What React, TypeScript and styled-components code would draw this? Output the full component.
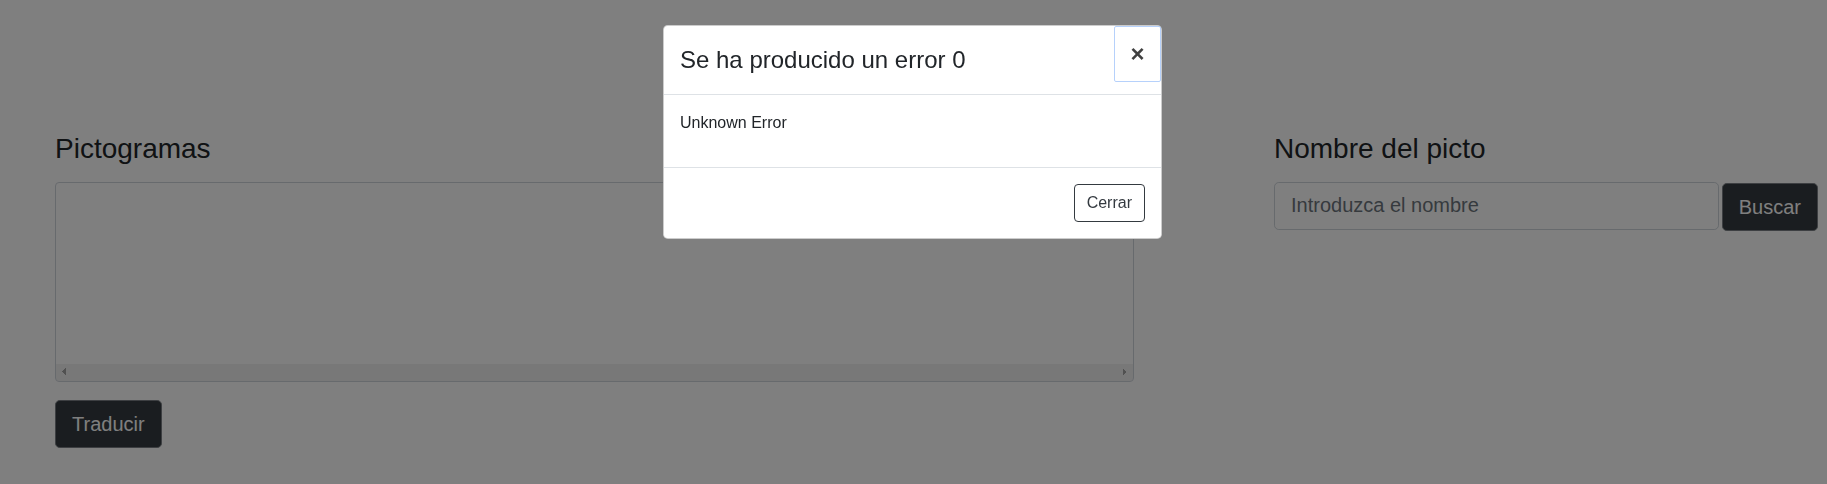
import React from "react";
import styled, { createGlobalStyle } from "styled-components";

const Global = createGlobalStyle`
  html, body { margin: 0; padding: 0; background: #fff; }
  body {
    font-family: "Liberation Sans", Arial, sans-serif;
    font-size: 16px;
    line-height: 1.5;
    color: #212529;
  }
  * { box-sizing: border-box; }
`;

const Page = styled.main`
  display: flex;
  align-items: flex-start;
  gap: 140px;
  padding: 132px 0 0 55px;
  height: 484px;
`;

const Column = styled.section<{ $width: number }>`
  display: flex;
  flex-direction: column;
  align-items: flex-start;
  width: ${(p) => p.$width}px;
`;

const Heading = styled.h3`
  margin: 0 0 16px;
  font-size: 28px;
  font-weight: 400;
  line-height: 1.2;
  color: #212529;
`;

const arrow = "#a3a3a3";

/* The textarea draws its (always visible) horizontal scrollbar strip
   with background layers: two arrow triangles and a light track. */
const TextArea = styled.textarea`
  width: 100%;
  height: 200px;
  border: 1px solid #ced4da;
  border-radius: 4px;
  padding: 6px 12px 23px;
  font-family: inherit;
  font-size: 16px;
  resize: none;
  overflow: hidden;
  white-space: nowrap;
  background-color: #fff;
  background-repeat: no-repeat;
  background-size: 4px 4px, 4px 4px, 4px 4px, 4px 4px, 100% 17px;
  background-position:
    left 6px bottom 9px,
    left 6px bottom 5px,
    right 6px bottom 9px,
    right 6px bottom 5px,
    left 0 bottom 0;
  background-image:
    linear-gradient(to top left, ${arrow} 50%, transparent 50%),
    linear-gradient(to bottom left, ${arrow} 50%, transparent 50%),
    linear-gradient(to top right, ${arrow} 50%, transparent 50%),
    linear-gradient(to bottom right, ${arrow} 50%, transparent 50%),
    linear-gradient(#f1f1f1, #f1f1f1);
  background-origin: padding-box;
  background-clip: padding-box;
`;

const DarkButton = styled.button<{ $mt?: number }>`
  margin-top: ${(p) => p.$mt ?? 0}px;
  height: 48px;
  padding: 8px 16px;
  font-family: inherit;
  font-size: 20px;
  line-height: 1.5;
  color: #fff;
  background: #343a40;
  border: 1px solid #7a7f84;
  border-radius: 4.8px;
  flex-shrink: 0;
`;

const SearchRow = styled.div`
  display: flex;
  align-items: flex-start;
  gap: 3px;
  width: 100%;
`;

const SearchInput = styled.input`
  width: 445px;
  height: 48px;
  padding: 8px 16px;
  font-family: inherit;
  font-size: 20px;
  line-height: 1.5;
  color: #495057;
  border: 1px solid #ced4da;
  border-radius: 4.8px;
  background: #fff;
  &::placeholder { color: #6c757d; }
`;

const Backdrop = styled.div`
  position: fixed;
  inset: 0;
  background: rgba(0, 0, 0, 0.5);
  z-index: 10;
`;

const Dialog = styled.div`
  position: fixed;
  top: 25px;
  left: calc(50% - 250.5px);
  width: 499px;
  z-index: 11;
  display: flex;
  flex-direction: column;
  background: #fff;
  border: 1px solid rgba(0, 0, 0, 0.2);
  border-radius: 4.8px;
`;

const ModalHeader = styled.div`
  display: flex;
  align-items: flex-start;
  justify-content: space-between;
  padding: 16px;
  border-bottom: 1px solid #dee2e6;
`;

const ModalTitle = styled.h4`
  margin: 0;
  font-size: 24px;
  font-weight: 400;
  line-height: 1.5;
  color: #212529;
`;

const CloseButton = styled.button`
  margin: -16px -16px -16px auto;
  padding: 16px;
  background: transparent;
  border: 0;
  outline: 1px solid #9ec2fa;
  outline-offset: -1px;
  border-radius: 2px;
  font-family: inherit;
  font-size: 24px;
  font-weight: 700;
  line-height: 1;
  color: #000;
  opacity: 0.75;
  text-shadow: 0 1px 0 #fff;
  height: 56px;
  width: 47px;
`;

const ModalBody = styled.div`
  padding: 16px;
  p {
    margin: 0 0 16px;
    font-size: 16px;
    line-height: 24px;
  }
`;

const ModalFooter = styled.div`
  display: flex;
  justify-content: flex-end;
  padding: 12px;
  border-top: 1px solid #dee2e6;
`;

const OutlineButton = styled.button`
  margin: 4px;
  height: 38px;
  padding: 6px 12px;
  font-family: inherit;
  font-size: 16px;
  line-height: 1.5;
  color: #343a40;
  background: transparent;
  border: 1px solid #343a40;
  border-radius: 4px;
`;

export default function App() {
  return (
    <>
      <Global />
      <Page>
        <Column $width={1079}>
          <Heading>Pictogramas</Heading>
          <TextArea readOnly />
          <DarkButton $mt={18}>Traducir</DarkButton>
        </Column>
        <Column $width={544}>
          <Heading>Nombre del picto</Heading>
          <SearchRow>
            <SearchInput placeholder="Introduzca el nombre" />
            <DarkButton $mt={1}>Buscar</DarkButton>
          </SearchRow>
        </Column>
      </Page>
      <Backdrop />
      <Dialog role="dialog">
        <ModalHeader>
          <ModalTitle>Se ha producido un error 0</ModalTitle>
          <CloseButton aria-label="Close">×</CloseButton>
        </ModalHeader>
        <ModalBody>
          <p>Unknown Error</p>
        </ModalBody>
        <ModalFooter>
          <OutlineButton>Cerrar</OutlineButton>
        </ModalFooter>
      </Dialog>
    </>
  );
}
